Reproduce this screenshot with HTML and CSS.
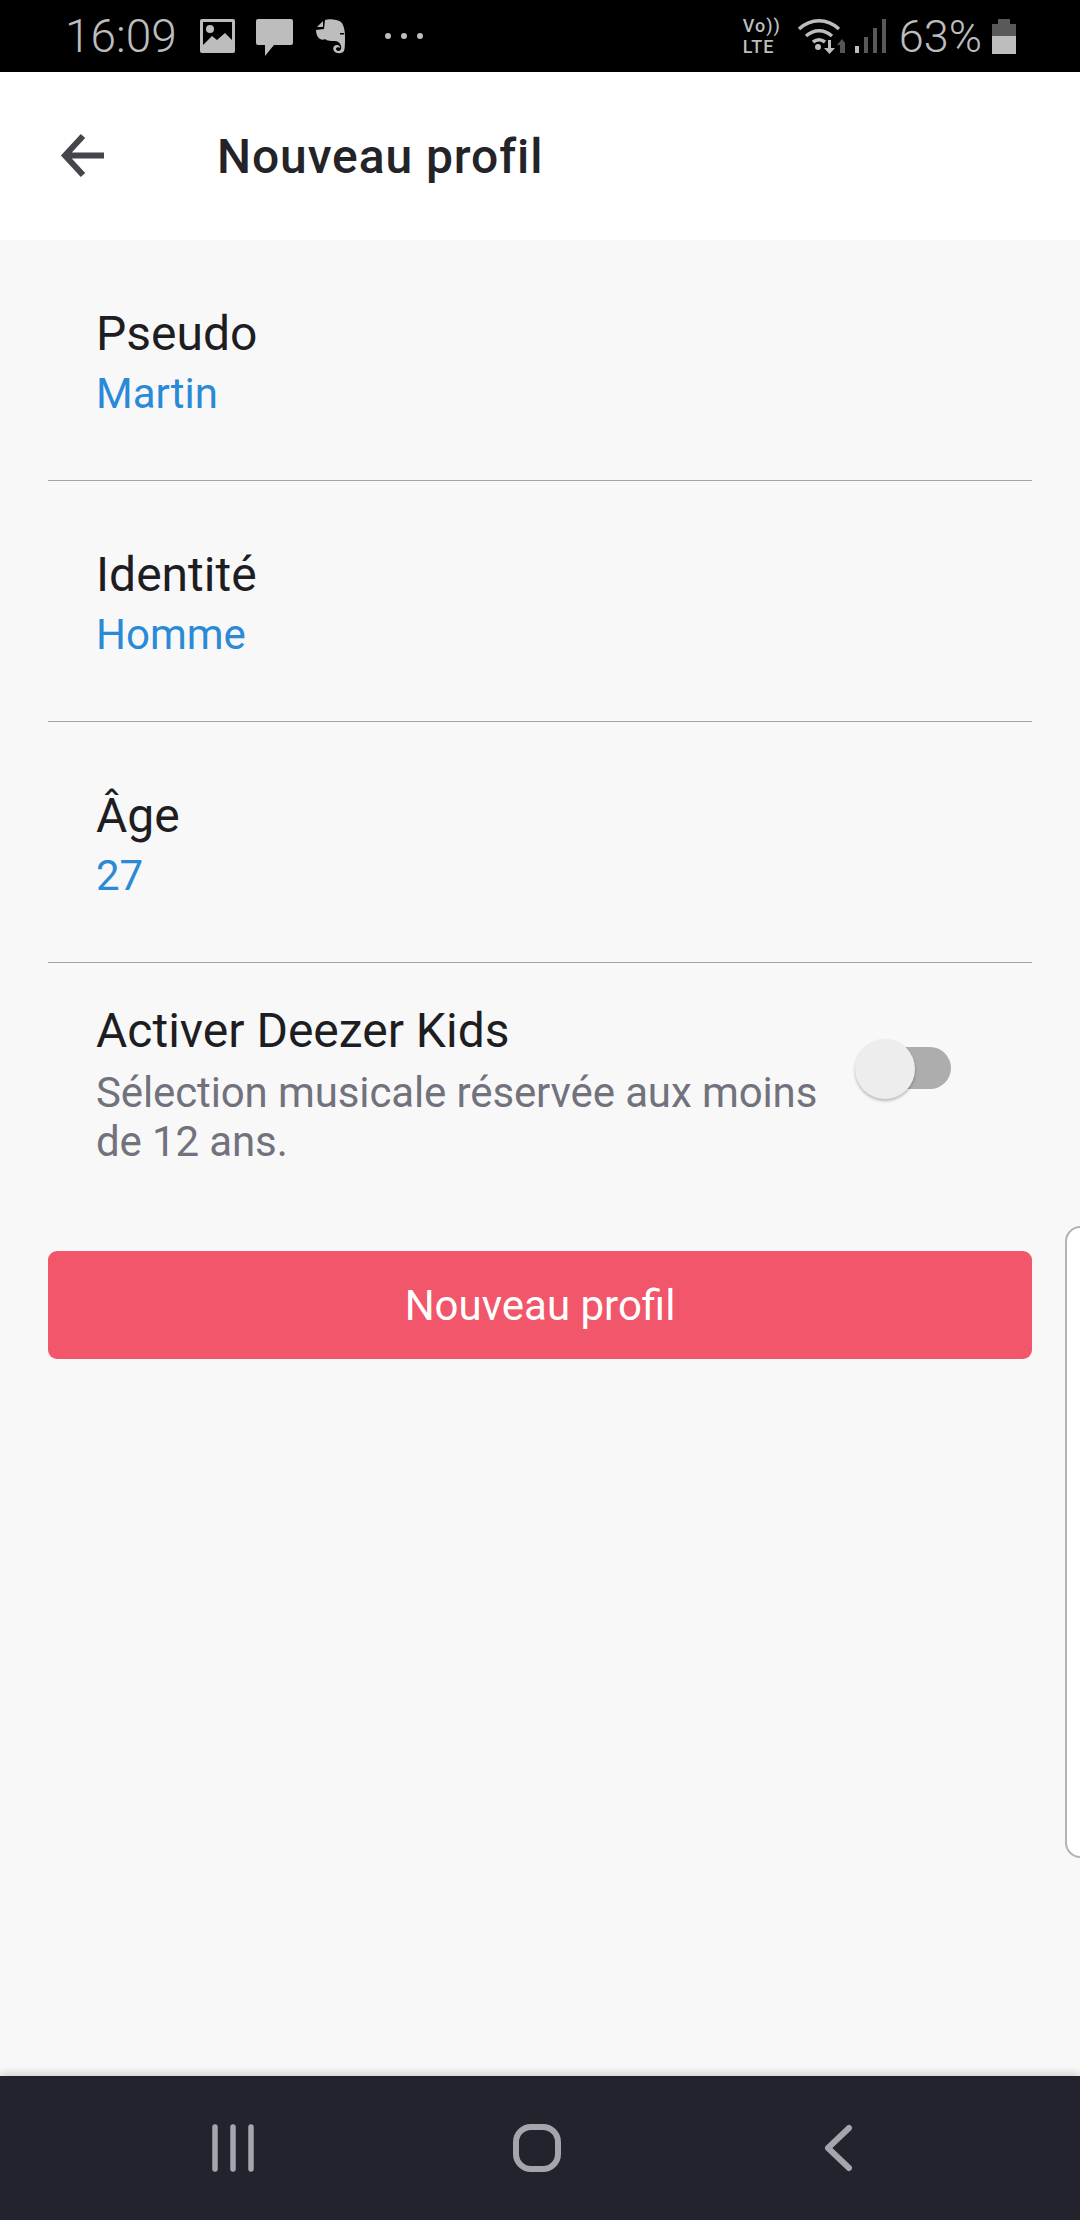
FILE: index.html
```html
<!DOCTYPE html>
<html lang="fr">
<head>
    <meta charset="UTF-8">
    <meta name="viewport" content="width=device-width, initial-scale=1.0">
    <title>Nouveau profil</title>
    <link rel="stylesheet" href="styles.css">
</head>
<body>
    <div class="status-bar">
        <span class="clock">16:09</span>
        <svg class="icon-image" width="35" height="34" viewBox="0 0 35 34">
            <rect width="35" height="34" rx="2" fill="#bdbdbd"/>
            <path d="M3 3h29v18l-7-7-8 7-5-4-9 9z" fill="#000"/>
            <circle cx="10" cy="10" r="4" fill="#bdbdbd"/>
        </svg>
        <svg class="icon-chat" width="37" height="37" viewBox="0 0 37 37">
            <path d="M2 0h33a2 2 0 0 1 2 2v22a2 2 0 0 1-2 2H18L9 37V26H2a2 2 0 0 1-2-2V2a2 2 0 0 1 2-2z" fill="#bdbdbd"/>
        </svg>
        <svg class="icon-note" width="30" height="35" viewBox="0 0 30 35">
            <path d="M9 1c4-1.500 12-1 16 2 3 3 4 9 4 15 0 6 0 12-1 14-2 3-8 3-10 0-2-3 0-6 3-6 2 0 3 1 3 3-1-1-4-1-4 1s4 3 5 0c1-4-2-8-6-8-4 0-8 0-10-2-1 1-3 1-5 0C1 18 0 14 0 11l8-1z" fill="#bdbdbd"/>
            <path d="M7 2v6H1z" fill="#bdbdbd"/>
            <path d="M24 14h4v1.500h-4z" fill="#000"/>
        </svg>
        <div class="dots"><i></i><i></i><i></i></div>

        <div class="status-right">
            <div class="volte"><span>Vo))</span><span>LTE</span></div>
            <svg class="icon-wifi" width="48" height="36" viewBox="0 0 48 36">
                <path d="M2 11C14 0 30 0 42 11M9 18c8-7 18-7 26 0M16 24c4-3 8-3 12 0" fill="none" stroke="#bdbdbd" stroke-width="3.500"/>
                <circle cx="21" cy="29" r="3" fill="#bdbdbd"/>
                <path d="M31 22h3v8h4l-5.500 6-5.500-6h4z" fill="#bdbdbd"/>
                <path d="M43 35v-8h-3l5-6 3 4v10z" fill="#555"/>
            </svg>
            <svg class="icon-signal" width="31" height="34" viewBox="0 0 31 34">
                <rect x="0" y="27" width="4" height="7" fill="#bdbdbd"/>
                <rect x="9" y="18" width="4" height="16" fill="#595959"/>
                <rect x="18" y="9" width="4" height="25" fill="#595959"/>
                <rect x="27" y="0" width="4" height="34" fill="#595959"/>
            </svg>
            <span class="battery-text">63%</span>
            <div class="battery"><div class="battery-cap"></div><div class="battery-empty"></div><div class="battery-full"></div></div>
        </div>
    </div>

    <div class="header">
        <svg class="back" width="46" height="46" viewBox="0 0 46 46">
            <path d="M45 22.500H7M24 3 6 22.500 24 42" fill="none" stroke="#45454d" stroke-width="6"/>
        </svg>
        <h1>Nouveau profil</h1>
    </div>

    <div class="content">
        <div class="row">
            <div class="label">Pseudo</div>
            <div class="value">Martin</div>
        </div>
        <div class="row">
            <div class="label">Identité</div>
            <div class="value">Homme</div>
        </div>
        <div class="row">
            <div class="label">Âge</div>
            <div class="value">27</div>
        </div>
        <div class="kids-row">
            <div class="kids-text">
                <div class="label">Activer Deezer Kids</div>
                <div class="sub">Sélection musicale réservée aux moins de 12 ans.</div>
            </div>
            <div class="toggle"><div class="toggle-thumb"></div></div>
        </div>
        <button class="submit">Nouveau profil</button>
    </div>

    <div class="edge-handle"></div>

    <div class="nav-bar">
        <svg width="46" height="48" viewBox="0 0 46 48">
            <path d="M5 3v42M23 3v42M41 3v42" fill="none" stroke="#a5a5ae" stroke-width="5.500" stroke-linecap="round"/>
        </svg>
        <svg width="48" height="48" viewBox="0 0 48 48">
            <rect x="3" y="3" width="42" height="42" rx="15" fill="none" stroke="#a5a5ae" stroke-width="6"/>
        </svg>
        <svg class="nav-back" width="30" height="48" viewBox="0 0 30 48">
            <path d="M26 4 5 24l21 20" fill="none" stroke="#a5a5ae" stroke-width="6" stroke-linecap="round" stroke-linejoin="round"/>
        </svg>
    </div>
</body>
</html>
```

FILE: styles.css
```css
html, body {
    margin: 0;
    height: 2220px;
    overflow: hidden;
}
body {
    position: relative;
    display: flex;
    flex-direction: column;
    font-family: Roboto, "Liberation Sans", sans-serif;
    background-color: #f8f8f9;
    color: #1d1d22;
}
.status-bar {
    height: 72px;
    flex: none;
    display: flex;
    align-items: center;
    padding: 0 64px 0 65px;
    background-color: #000;
    color: #bdbdbd;
}
.clock {
    font-size: 46px;
    font-weight: 300;
}
.icon-image {
    margin-left: 23px;
}
.icon-chat {
    margin: 2px 0 0 21px;
}
.icon-note {
    margin-left: 23px;
}
.dots {
    display: flex;
    gap: 10px;
    margin-left: 39px;
}
.dots i {
    width: 6px;
    height: 6px;
    border-radius: 50%;
    background-color: #bdbdbd;
}
.status-right {
    margin-left: auto;
    display: flex;
    align-items: center;
}
.volte {
    display: flex;
    flex-direction: column;
    font-size: 18px;
    font-weight: 500;
    letter-spacing: 1px;
    line-height: 21px;
}
.icon-wifi {
    margin-left: 16px;
}
.icon-signal {
    margin-left: 10px;
}
.battery-text {
    margin-left: 13px;
    font-size: 45px;
    font-weight: 300;
}
.battery {
    margin-left: 10px;
    width: 24px;
    display: flex;
    flex-direction: column;
    align-items: center;
}
.battery-cap {
    width: 12px;
    height: 5px;
    background-color: #595959;
}
.battery-empty {
    width: 100%;
    height: 12px;
    background-color: #595959;
}
.battery-full {
    width: 100%;
    height: 18px;
    background-color: #bdbdbd;
}
.header {
    height: 168px;
    flex: none;
    display: flex;
    align-items: center;
    padding-left: 59px;
    background-color: #fff;
}
.back {
    flex: none;
}
.header h1 {
    margin: 0 0 0 112px;
    font-size: 48px;
    font-weight: 500;
    letter-spacing: 0.9px;
    color: #232328;
}
.content {
    flex: 1;
    padding: 0 48px;
}
.row {
    height: 232px;
    border-bottom: 1px solid #a3a3a6;
    padding-left: 48px;
    padding-top: 8px;
    display: flex;
    flex-direction: column;
    justify-content: center;
}
.label {
    font-size: 48px;
    line-height: 60px;
}
.value {
    font-size: 42px;
    line-height: 60px;
    color: #2b8ad6;
}
.kids-row {
    display: flex;
    align-items: flex-start;
    padding: 38px 0 0 48px;
}
.kids-text {
    width: 730px;
}
.sub {
    font-size: 42px;
    line-height: 49px;
    margin-top: 7px;
    letter-spacing: -0.12px;
    color: #72727d;
}
.toggle {
    position: relative;
    margin: 46px 0 0 45px;
    width: 80px;
    height: 42px;
    border-radius: 21px;
    background-color: #adadad;
}
.toggle-thumb {
    position: absolute;
    left: -16px;
    top: -8px;
    width: 60px;
    height: 60px;
    border-radius: 50%;
    background-color: #ededed;
    box-shadow: 0 2px 3px rgba(0, 0, 0, 0.25);
}
.submit {
    display: block;
    width: 100%;
    height: 108px;
    margin-top: 85px;
    border: none;
    border-radius: 9px;
    background-color: #f1566a;
    color: #fff;
    font-family: inherit;
    font-size: 42px;
}
.edge-handle {
    position: absolute;
    right: -16px;
    top: 1226px;
    width: 27px;
    height: 628px;
    border: 2px solid #b4b4b8;
    border-radius: 18px;
    background-color: #fff;
}
.nav-bar {
    position: relative;
    height: 144px;
    flex: none;
    display: grid;
    grid-template-columns: 46px 48px 35px;
    justify-content: center;
    column-gap: 257px;
    align-items: center;
    padding-right: 17px;
    background-color: #23232e;
    box-shadow: 0 -3px 8px rgba(0, 0, 0, 0.15);
}
.nav-back {
    justify-self: end;
}
```
